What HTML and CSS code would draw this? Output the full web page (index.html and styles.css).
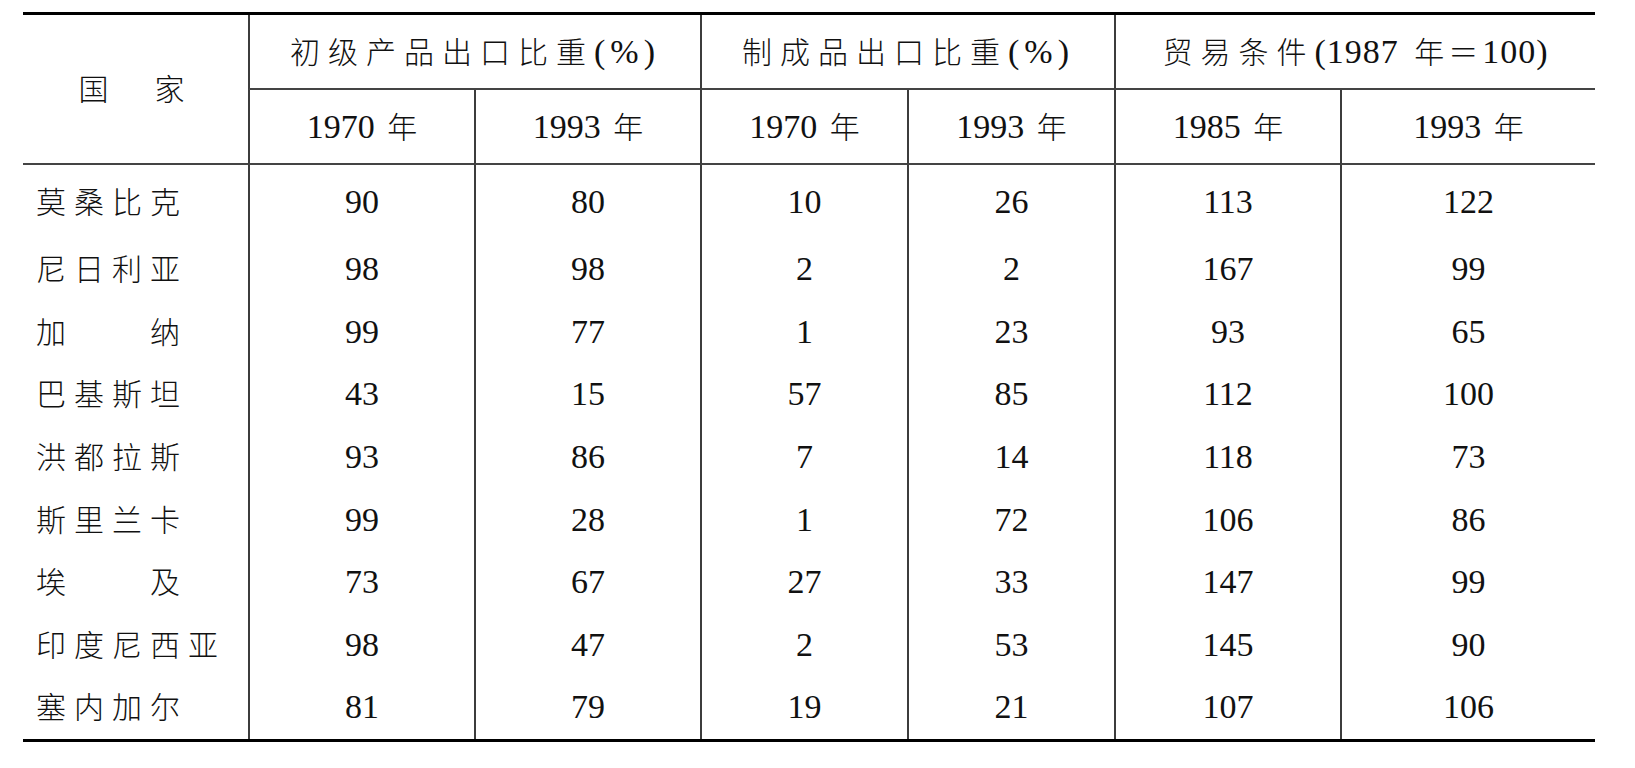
FILE: index.html
```html
<!DOCTYPE html>
<html lang="zh-CN">
<head>
<meta charset="utf-8">
<title>贸易结构</title>
<link rel="stylesheet" href="styles.css">
</head>
<body>
<table class="trade">
  <colgroup>
    <col class="col-name">
    <col class="col-wide">
    <col class="col-wide">
    <col class="col-narrow">
    <col class="col-narrow">
    <col class="col-wide">
    <col class="col-last">
  </colgroup>
  <thead>
    <tr class="group-row">
      <th rowspan="2" class="country-head"><span class="cjk">国　家</span></th>
      <th colspan="2" class="group"><span class="cjk">初级产品出口比重</span><span class="pct">(%)</span></th>
      <th colspan="2" class="group"><span class="cjk">制成品出口比重</span><span class="pct">(%)</span></th>
      <th colspan="2" class="group"><span class="cjk">贸易条件</span><span class="base">(1987 <span class="cjk yr wide">年</span><span class="cjk eq">＝</span>100)</span></th>
    </tr>
    <tr class="year-row">
      <th>1970 <span class="cjk yr">年</span></th>
      <th>1993 <span class="cjk yr">年</span></th>
      <th>1970 <span class="cjk yr">年</span></th>
      <th>1993 <span class="cjk yr">年</span></th>
      <th>1985 <span class="cjk yr">年</span></th>
      <th>1993 <span class="cjk yr">年</span></th>
    </tr>
  </thead>
  <tbody>
    <tr class="first"><td class="name"><span class="cjk">莫桑比克</span></td><td>90</td><td>80</td><td>10</td><td>26</td><td>113</td><td>122</td></tr>
    <tr><td class="name"><span class="cjk">尼日利亚</span></td><td>98</td><td>98</td><td>2</td><td>2</td><td>167</td><td>99</td></tr>
    <tr><td class="name"><span class="cjk spread">加纳</span></td><td>99</td><td>77</td><td>1</td><td>23</td><td>93</td><td>65</td></tr>
    <tr><td class="name"><span class="cjk">巴基斯坦</span></td><td>43</td><td>15</td><td>57</td><td>85</td><td>112</td><td>100</td></tr>
    <tr><td class="name"><span class="cjk">洪都拉斯</span></td><td>93</td><td>86</td><td>7</td><td>14</td><td>118</td><td>73</td></tr>
    <tr><td class="name"><span class="cjk">斯里兰卡</span></td><td>99</td><td>28</td><td>1</td><td>72</td><td>106</td><td>86</td></tr>
    <tr><td class="name"><span class="cjk spread">埃及</span></td><td>73</td><td>67</td><td>27</td><td>33</td><td>147</td><td>99</td></tr>
    <tr><td class="name"><span class="cjk">印度尼西亚</span></td><td>98</td><td>47</td><td>2</td><td>53</td><td>145</td><td>90</td></tr>
    <tr><td class="name"><span class="cjk">塞内加尔</span></td><td>81</td><td>79</td><td>19</td><td>21</td><td>107</td><td>106</td></tr>
  </tbody>
</table>
</body>
</html>
```

FILE: styles.css
```css
html, body {
  margin: 0;
  padding: 0;
  background: #fff;
}

body {
  color: #111;
  font-family: "Liberation Serif", "Noto Sans CJK SC", serif;
}

.trade {
  margin: 12px 0 0 23px;
  width: 1572px;
  table-layout: fixed;
  border-collapse: separate;
  border-spacing: 0;
  border-top: 3px solid #000;
  border-bottom: 3px solid #000;
  font-size: 34px;
  line-height: 1;
}

.col-name { width: 225px; }
.col-wide { width: 226px; }
.col-narrow { width: 207px; }
.col-last { width: 255px; }

.trade th,
.trade td {
  box-sizing: border-box;
  padding: 0;
  font-weight: normal;
  text-align: center;
  vertical-align: middle;
  white-space: nowrap;
  border-left: 2px solid #3c3c3c;
}

.trade th.country-head,
.trade td.name {
  border-left: none;
}

.cjk {
  font-family: "Noto Sans CJK SC", sans-serif;
  font-size: 30px;
  letter-spacing: 8px;
  font-weight: 300;
}

.cjk.yr {
  letter-spacing: 0;
  margin-left: 4px;
}

.base {
  letter-spacing: 1px;
}

.cjk.yr.wide {
  margin-left: 6px;
}

.cjk.eq {
  letter-spacing: 0;
  margin: 0 4px;
}

.pct {
  letter-spacing: 5px;
}

.group-row th.group {
  height: 75px;
  border-bottom: 2px solid #444;
}

.year-row th {
  height: 75px;
  border-bottom: 2px solid #444;
}

.country-head {
  border-bottom: 2px solid #444;
  padding-left: 8px;
}

.trade tbody td {
  height: 62.6px;
}

.trade tbody tr.first td {
  height: 73px;
}

.trade td.name {
  text-align: left;
  padding-left: 13px;
}

.spread {
  display: inline-block;
  width: 152px;
  text-align: justify;
  text-align-last: justify;
}
```
